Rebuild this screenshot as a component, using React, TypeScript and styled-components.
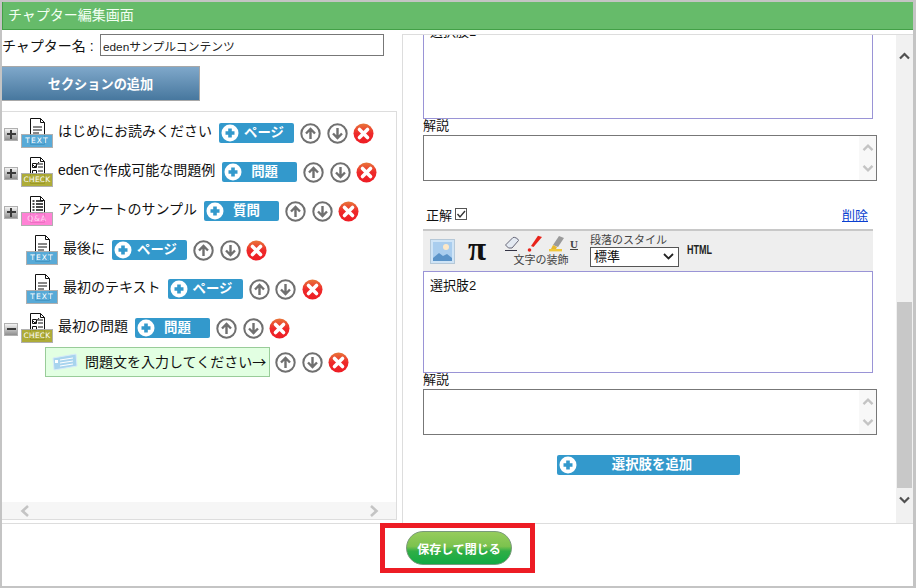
import React from "react";
import styled, { createGlobalStyle } from "styled-components";

const UI_FONT = `"Liberation Sans", "Noto Sans CJK JP", sans-serif`;

const Global = createGlobalStyle`
  html, body { margin: 0; padding: 0; background: #fff; }
  * { box-sizing: border-box; }
  body { font-family: ${UI_FONT}; color: #111; }
`;

const Frame = styled.div`
  width: 916px; height: 588px; display: flex; flex-direction: column; overflow: hidden;
  background: #fff; border: 2px solid #c4c4c4; border-right-width: 3px; border-top-width: 2px;
`;
const TitleBar = styled.div`
  height: 28px; flex: none; background: #66bb6a; border-bottom: 1px solid #43a047; border-left: 1px solid #43a047;
  color: #f2fff2; font-size: 14px; line-height: 27px; padding-left: 5px;
`;
const Body = styled.div`
  height: 494px; flex: none; display: flex; border-bottom: 1px solid #ddd;
`;
const LeftCol = styled.div`
  width: 398px; flex: none; display: flex; flex-direction: column;
`;
const NameRow = styled.div`
  height: 22px; margin-top: 4px; display: flex; align-items: center; font-size: 14px; flex: none;
`;
const NameLabel = styled.span` width: 98px; white-space: nowrap; `;
const NameInput = styled.input`
  width: 284px; height: 22px; border: 1px solid #777; padding: 0 2px; font: 11.8px ${UI_FONT}; color: #222; outline: none;
`;
const SectionButton = styled.button`
  width: 198px; height: 35px; margin-top: 10px; flex: none; border: 1px solid #a8a8a8; border-width: 1px 1px 1px 0;
  background: linear-gradient(#7fa8ca, #47779e); color: #fff; font: bold 13.2px ${UI_FONT}; padding: 0;
`;
const TreeBox = styled.div`
  flex: 1; margin: 10px 3px 3px 0; border: 1px solid #ddd; border-left: 0; display: flex; flex-direction: column; min-height: 0;
`;
const TreeList = styled.div`
  flex: 1; padding: 6px 0 0 2px; display: flex; flex-direction: column; gap: 9px;
`;
const Row = styled.div<{ $indent?: number; $tight?: boolean }>`
  height: 30px; display: flex; align-items: center; flex: none; white-space: nowrap;
  padding-left: ${(p) => p.$indent ?? 0}px;
  margin-top: ${(p) => (p.$tight ? -5 : 0)}px;
`;
const Toggle = styled.div`
  width: 14px; height: 13px; margin: 2px 3px 0 0; flex: none; border: 1px solid #b0b0b0; background: linear-gradient(#f4f4f4, #8e8e8e);
  display: flex; align-items: center; justify-content: center;
`;
const ToggleMark = styled.span<{ $plus: boolean }>`
  display: block; width: 9px; height: 2px; background: #3a3a3a; position: relative;
  &::after { content: ""; display: ${(p) => (p.$plus ? "block" : "none")}; position: absolute; left: 3.5px; top: -3.5px; width: 2px; height: 9px; background: #3a3a3a; }
`;
const KindIcon = styled.div`
  width: 32px; height: 30px; position: relative; flex: none; margin-right: 5px;
`;
const KindBadge = styled.span<{ $color: string; $fg: string; $spacing: number }>`
  position: absolute; left: 0; bottom: 0; width: 32px; height: 14px; border: 1px solid #aaa; background: ${(p) => p.$color};
  color: ${(p) => p.$fg}; font: 7.5px/12px "DejaVu Sans", sans-serif; text-align: center; letter-spacing: ${(p) => p.$spacing}px; opacity: 0.92; white-space: nowrap;
`;
const DocSvg = styled.svg`
  position: absolute; left: 8px; top: 0; width: 17px; height: 27px;
`;
const RowLabel = styled.span`
  font-size: 14px; line-height: 20px; margin: 0 7px 5px 0; color: #111;
`;
const BlueButton = styled.button<{ $w: number; $pad: number }>`
  width: ${(p) => p.$w}px; height: 20px; flex: none; border: none; border-radius: 2px; background: #3399cc; color: #fff;
  font: bold 13.4px/20px ${UI_FONT}; padding: 0 0 0 ${(p) => p.$pad}px; display: flex; align-items: center; position: relative; margin-right: 6px;
`;
const PlusSvg = styled.svg`
  position: absolute; left: 2px; top: 1px; width: 18px; height: 18px;
`;
const RoundIcon = styled.svg`
  width: 21px; height: 21px; flex: none; margin-right: 5.5px;
`;
const QuestionBox = styled.div`
  width: 225px; height: 30px; margin-left: 41px; flex: none; border: 1px solid #99cc99; background: #e2ffe2; display: flex; align-items: center;
  font: 14px "Noto Sans CJK JP", sans-serif; padding-left: 6px; margin-right: 5px; white-space: nowrap; overflow: hidden;
`;
const QuestionText = styled.span` margin-bottom: 3px; `;
const CardSvg = styled.svg`
  width: 26px; height: 18px; flex: none; margin-right: 7px;
`;
const HScroll = styled.div`
  height: 17px; flex: none; background: #f6f6f6; display: flex; align-items: center; justify-content: space-between; padding: 0 16px 0 17px;
`;
const ScrollPanel = styled.div`
  flex: 1; margin: 4px 0 0 2px; border-top: 1px solid #ddd; border-left: 1px solid #ddd; display: flex; min-width: 0; overflow: hidden;
`;
const PanelContent = styled.div`
  flex: 1; padding-left: 20px; display: flex; flex-direction: column; min-width: 0;
`;
const VScroll = styled.div`
  width: 17px; flex: none; background: #f1f1f1; display: flex; flex-direction: column; align-items: center;
`;
const VThumb = styled.div`
  width: 15px; height: 186px; margin-top: 242px; background: #c8c8c8; flex: none;
`;
const VArrowUp = styled.svg` width: 11px; height: 8px; margin-top: 17px; flex: none; `;
const VArrowDown = styled.svg` width: 11px; height: 8px; margin-top: 8px; flex: none; `;
const Editor = styled.div<{ $first?: boolean }>`
  width: 450px; height: 102px; flex: none; border: 1px solid #9a94d6; background: #fff; font-size: 13px; line-height: 20px; padding: 4px 6px;
  margin-top: ${(p) => (p.$first ? -18 : 0)}px;
`;
const FieldLabel = styled.div`
  height: 16px; font-size: 13px; line-height: 14px; flex: none;
`;
const Explain = styled.div`
  width: 454px; height: 46px; flex: none; border: 1px solid #777; background: #fff; display: flex; justify-content: flex-end;
`;
const ExplainStrip = styled.div`
  width: 17px; background: #f8f8f8; display: flex; flex-direction: column; align-items: center; justify-content: space-between; padding: 7px 0;
`;
const SmallChevron = styled.svg<{ $tall?: boolean }>`
  width: 12px; height: ${(p) => (p.$tall ? 12 : 9)}px; flex: none;
`;
const AnswerRow = styled.div`
  width: 445px; height: 18px; margin: 24px 0 6px; padding-left: 3px; display: flex; align-items: center; font-size: 13px; flex: none;
`;
const AnswerCheck = styled.span`
  width: 12px; height: 12px; border: 1px solid #555; margin-left: 3px; display: flex; align-items: center; justify-content: center;
`;
const DeleteLink = styled.a`
  margin-left: auto; color: #0a3fd0; text-decoration: underline; font-size: 13px;
`;
const Toolbar = styled.div`
  width: 450px; height: 42px; flex: none; background: #eeeeee; border-top: 2px solid #c8c8c8; display: flex; align-items: center; padding-left: 7px;
`;
const PictureSvg = styled.svg` width: 25px; height: 25px; flex: none; `;
const PiGlyph = styled.span`
  width: 20px; margin: 0 0 4px 13px; font: bold 33px/28px "Liberation Serif", serif; color: #111; flex: none;
`;
const DecorGroup = styled.div`
  width: 78px; margin: 0 0 2px 14px; display: flex; flex-direction: column; align-items: center; flex: none;
`;
const DecorIcons = styled.div` display: flex; align-items: center; gap: 5px; height: 20px; `;
const DecorSvg = styled.svg` width: 17px; height: 17px; flex: none; `;
const UnderlineU = styled.span`
  font: bold 11px/14px "Liberation Serif", serif; text-decoration: underline; color: #444;
`;
const SmallCaption = styled.span`
  font-size: 11px; line-height: 13px; color: #444; white-space: nowrap;
`;
const ParaGroup = styled.div`
  margin: 0 0 2px 10px; width: 89px; display: flex; flex-direction: column; flex: none;
`;
const FakeSelect = styled.div`
  width: 89px; height: 20px; border: 1px solid #555; background: #fff; font-size: 13px; line-height: 18px; padding-left: 3px; display: flex; align-items: center; justify-content: space-between; padding-right: 4px;
`;
const HtmlTag = styled.span`
  margin: 0 0 2px 8px; font: bold 12.5px "Liberation Sans", sans-serif; color: #222; transform: scaleX(0.72); transform-origin: left; display: inline-block;
`;
const AddWrap = styled.div`
  width: 450px; margin-top: 20px; display: flex; justify-content: center; flex: none;
`;
const AddChoice = styled(BlueButton)` margin-right: 0; justify-content: center; `;
const Footer = styled.div`
  flex: 1; margin-top: -1px; display: flex; align-items: flex-start; justify-content: center; position: relative;
`;
const Highlight = styled.div`
  width: 155px; height: 50px; border: 5px solid #ed1c24; display: flex; align-items: center; justify-content: center; padding-left: 3px;
`;
const SaveButton = styled.button`
  width: 106px; height: 34px; border-radius: 17px; border: 1px solid #7a9a7a; color: #fff; font: bold 12px ${UI_FONT}; padding: 0;
  background: linear-gradient(#96cc5c 0%, #7cc24e 45%, #2fae46 60%, #12aa44 100%);
`;

const Plus = () => (
  <PlusSvg viewBox="0 0 18 18">
    <circle cx="9" cy="9" r="8.5" fill="#fff" />
    <path d="M9 4.5v9M4.5 9h9" stroke="#3399cc" strokeWidth="3.6" />
  </PlusSvg>
);
const Arrow = ({ down }: { down?: boolean }) => (
  <RoundIcon viewBox="0 0 21 21">
    <circle cx="10.5" cy="10.5" r="9.2" fill="#fff" stroke="#707070" strokeWidth="2" />
    <path d={down ? "M10.5 5v10M6 10.5l4.5 4.5 4.5-4.5" : "M10.5 16V6M6 10.5L10.5 6l4.5 4.5"} fill="none" stroke="#707070" strokeWidth="2.4" />
  </RoundIcon>
);
const Remove = () => (
  <RoundIcon viewBox="0 0 21 21">
    <defs>
      <linearGradient id="rg" x1="0" y1="0" x2="0" y2="1">
        <stop offset="0" stopColor="#e8763a" />
        <stop offset="0.5" stopColor="#ee2a2a" />
        <stop offset="1" stopColor="#ee1c24" />
      </linearGradient>
    </defs>
    <circle cx="10.5" cy="10.5" r="10" fill="url(#rg)" />
    <path d="M6.5 6.5l8 8M14.5 6.5l-8 8" stroke="#fff" strokeWidth="3.6" strokeLinecap="round" />
  </RoundIcon>
);
const Actions = () => (
  <>
    <Arrow />
    <Arrow down />
    <Remove />
  </>
);

type Kind = "text" | "check" | "qa";
const kinds: Record<Kind, { label: string; color: string; fg: string; spacing: number }> = {
  text: { label: "TEXT", color: "#4aa3d4", fg: "#fff", spacing: 1.1 },
  check: { label: "CHECK", color: "#a8a528", fg: "#fff", spacing: 0.2 },
  qa: { label: "Q&A", color: "#ff78d2", fg: "#ffd8f2", spacing: 0.8 },
};
const Doc = ({ kind }: { kind: Kind }) => (
  <DocSvg viewBox="0 0 17 27">
    <path d="M1.5.5h10l4 4v22h-14z" fill="#fff" stroke="#111" />
    <path d="M11.5.5v4h4" fill="none" stroke="#111" />
    {kind === "text" && <path d="M4 9h9M4 12h9M4 15h6" stroke="#111" />}
    {kind === "check" && <path d="M3.5 6.5h4v4h-4zM3.5 13.5h4v4h-4zM9 7h5M9 10h5M9 14h5M9 17h5M4 8l2 2 4-5" fill="none" stroke="#111" />}
    {kind === "qa" && <path d="M3.5 5h2M7 5h7M3.5 8h2M7 8h7M3.5 11h2M7 11h7M3.5 14h2M7 14h7M3.5 17h2M7 17h7" stroke="#111" strokeWidth="1.4" />}
  </DocSvg>
);
const TypeIcon = ({ kind }: { kind: Kind }) => (
  <KindIcon>
    <Doc kind={kind} />
    <KindBadge $color={kinds[kind].color} $fg={kinds[kind].fg} $spacing={kinds[kind].spacing}>{kinds[kind].label}</KindBadge>
  </KindIcon>
);

const rows: { label: string; kind: Kind; btn: string; pad: number; toggle?: "plus" | "minus" }[] = [
  { label: "はじめにお読みください", kind: "text", btn: "ページ", pad: 25, toggle: "plus" },
  { label: "edenで作成可能な問題例", kind: "check", btn: "問題", pad: 29, toggle: "plus" },
  { label: "アンケートのサンプル", kind: "qa", btn: "質問", pad: 29, toggle: "plus" },
  { label: "最後に", kind: "text", btn: "ページ", pad: 25 },
  { label: "最初のテキスト", kind: "text", btn: "ページ", pad: 25 },
  { label: "最初の問題", kind: "check", btn: "問題", pad: 29, toggle: "minus" },
];

const Chevron = ({ dir, color }: { dir: "up" | "down" | "left" | "right"; color: string }) => {
  const d = { up: "M1 8l5-5 5 5", down: "M1 2l5 5 5-5", left: "M9 1L3.5 6 9 11", right: "M3 1l5.5 5L3 11" }[dir];
  const side = dir === "left" || dir === "right";
  return (
    <SmallChevron $tall={side} viewBox={side ? "0 0 12 12" : "0 0 12 10"}>
      <path d={d} fill="none" stroke={color} strokeWidth="2.6" />
    </SmallChevron>
  );
};
const ExplainField = () => (
  <Explain>
    <ExplainStrip>
      <Chevron dir="up" color="#c4c4c4" />
      <Chevron dir="down" color="#c4c4c4" />
    </ExplainStrip>
  </Explain>
);

export default function App() {
  return (
    <Frame>
      <Global />
      <TitleBar>チャプター編集画面</TitleBar>
      <Body>
        <LeftCol>
          <NameRow>
            <NameLabel>チャプター名 :</NameLabel>
            <NameInput defaultValue="edenサンプルコンテンツ" />
          </NameRow>
          <SectionButton>セクションの追加</SectionButton>
          <TreeBox>
            <TreeList>
              {rows.map((r) => (
                <Row key={r.label} $indent={r.toggle ? 0 : 22}>
                  {r.toggle && (
                    <Toggle>
                      <ToggleMark $plus={r.toggle === "plus"} />
                    </Toggle>
                  )}
                  <TypeIcon kind={r.kind} />
                  <RowLabel>{r.label}</RowLabel>
                  <BlueButton $w={75} $pad={r.pad}>
                    <Plus />
                    {r.btn}
                  </BlueButton>
                  <Actions />
                </Row>
              ))}
              <Row $tight>
                <QuestionBox>
                  <CardSvg viewBox="0 0 26 18">
                    <path d="M1 5l23-4 1 12-23 4z" fill="#a8d4ee" stroke="#d8ecf8" />
                    <path d="M8 7l13-2M8 10l13-2M8 13l13-2" stroke="#fff" />
                    <rect x="3" y="7" width="3" height="3" fill="#fff" />
                  </CardSvg>
                  <QuestionText>問題文を入力してください→</QuestionText>
                </QuestionBox>
                <Actions />
              </Row>
            </TreeList>
            <HScroll>
              <Chevron dir="left" color="#c4c4c4" />
              <Chevron dir="right" color="#c4c4c4" />
            </HScroll>
          </TreeBox>
        </LeftCol>
        <ScrollPanel>
          <PanelContent>
            <Editor $first>選択肢1</Editor>
            <FieldLabel>解説</FieldLabel>
            <ExplainField />
            <AnswerRow>
              正解
              <AnswerCheck>
                <svg width="10" height="10" viewBox="0 0 10 10">
                  <path d="M1.5 5l2.5 3 5-6" fill="none" stroke="#333" strokeWidth="1.4" />
                </svg>
              </AnswerCheck>
              <DeleteLink>削除</DeleteLink>
            </AnswerRow>
            <Toolbar>
              <PictureSvg viewBox="0 0 25 25">
                <rect x="0.5" y="0.5" width="24" height="24" fill="#cfe4f6" stroke="#b5c8d8" />
                <rect x="3" y="3" width="19" height="19" fill="#a9cdee" />
                <circle cx="16" cy="8" r="3" fill="#fde8c8" />
                <path d="M3 19l6-5 4 3 4-2 5 4v3H3z" fill="#5a93c8" />
              </PictureSvg>
              <PiGlyph>π</PiGlyph>
              <DecorGroup>
                <DecorIcons>
                  <DecorSvg viewBox="0 0 17 17">
                    <path d="M1.5 10L9 2.5c1-.8 5.5 1 5.5 3L8 13H4.5z" fill="#e4eaf2" stroke="#667" />
                    <path d="M1 15.5h12" stroke="#334" />
                  </DecorSvg>
                  <DecorSvg viewBox="0 0 17 17">
                    <path d="M5 11L12 .8 16 2 7.5 12z" fill="#e8231a" />
                    <circle cx="3.5" cy="15" r="1.8" fill="#e8231a" />
                  </DecorSvg>
                  <DecorSvg viewBox="0 0 17 17">
                    <path d="M5 10L11 1l5 2-6 9z" fill="#9a9a9a" />
                    <path d="M1 14h13v2.4H1z" fill="#f0c83c" />
                    <path d="M3 14l2-4 4 2-1 2z" fill="#e8b82c" />
                  </DecorSvg>
                  <UnderlineU>U</UnderlineU>
                </DecorIcons>
                <SmallCaption>文字の装飾</SmallCaption>
              </DecorGroup>
              <ParaGroup>
                <SmallCaption>段落のスタイル</SmallCaption>
                <FakeSelect>
                  標準
                  <svg width="11" height="7" viewBox="0 0 11 7">
                    <path d="M1 1l4.5 4.5L10 1" fill="none" stroke="#222" strokeWidth="1.8" />
                  </svg>
                </FakeSelect>
              </ParaGroup>
              <HtmlTag>HTML</HtmlTag>
            </Toolbar>
            <Editor>選択肢2</Editor>
            <FieldLabel>解説</FieldLabel>
            <ExplainField />
            <AddWrap>
              <AddChoice $w={183} $pad={8}>
                <Plus />
                選択肢を追加
              </AddChoice>
            </AddWrap>
          </PanelContent>
          <VScroll>
            <VArrowUp viewBox="0 0 11 8">
              <path d="M1 6.5l4.5-4.5L10 6.5" fill="none" stroke="#505050" strokeWidth="2.2" />
            </VArrowUp>
            <VThumb />
            <VArrowDown viewBox="0 0 11 8">
              <path d="M1 1.5L5.5 6 10 1.5" fill="none" stroke="#505050" strokeWidth="2.2" />
            </VArrowDown>
          </VScroll>
        </ScrollPanel>
      </Body>
      <Footer>
        <Highlight>
          <SaveButton>保存して閉じる</SaveButton>
        </Highlight>
      </Footer>
    </Frame>
  );
}
